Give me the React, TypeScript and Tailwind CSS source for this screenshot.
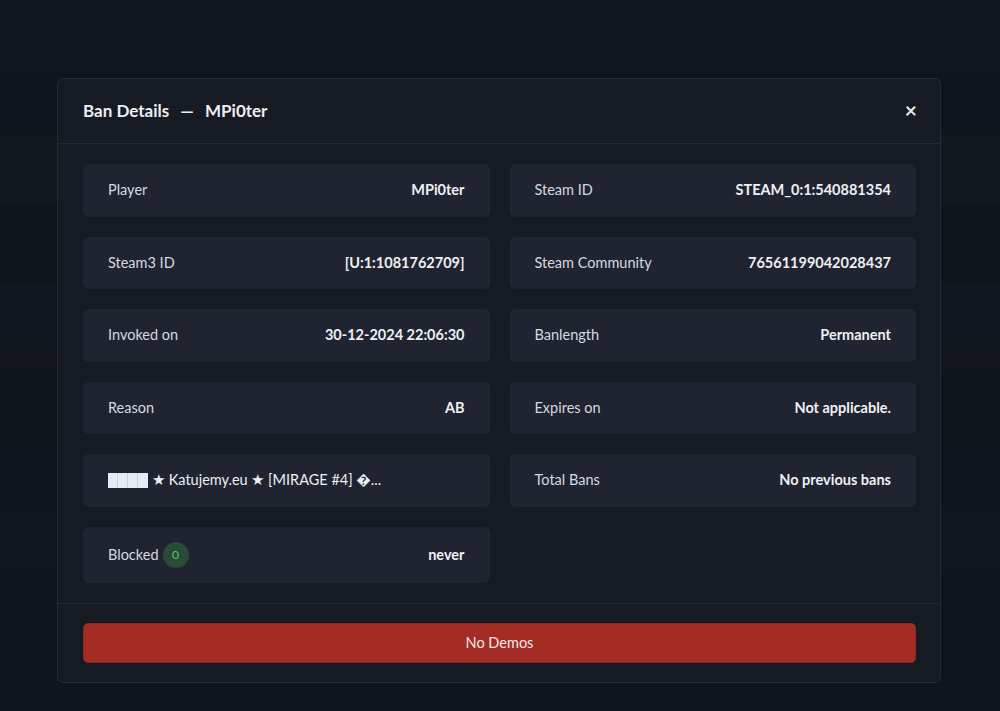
import React from "react";

function Card({ label, value, tall }: { label: React.ReactNode; value?: React.ReactNode; tall?: boolean }) {
  return (
    <div
      className={`flex items-center justify-between rounded-md bg-[#1f2430] pl-[25px] pr-[25px] ${tall ? "h-[56px]" : "h-[52.5px]"}`}
    >
      <div className="flex items-center text-[14.5px] text-[#d5d9e0]">{label}</div>
      {value !== undefined && <div className="text-[14.5px] font-bold text-[#eef0f3]">{value}</div>}
    </div>
  );
}

export default function App() {
  return (
    <div
      className="relative h-[711px] w-[1000px] overflow-hidden bg-[#10141c]"
      style={{ fontFamily: "Lato, 'Noto Sans', sans-serif" }}
    >
      {/* faint background bands */}
      <div className="flex h-full flex-col">
        <div className="h-[70px] bg-[#11151d]" />
        <div className="h-[65px] bg-[#10141c]" />
        <div className="h-[70px] bg-[#13181f]" />
        <div className="h-[80px] bg-[#10151c]" />
        <div className="h-[60px] bg-[#11171e]" />
        <div className="h-[25px] bg-[#14161e]" />
        <div className="h-[80px] bg-[#10151c]" />
        <div className="h-[60px] bg-[#10141c]" />
        <div className="h-[60px] bg-[#11171e]" />
        <div className="flex-1 bg-[#10141c]" />
      </div>

      {/* modal */}
      <div className="absolute left-[57px] top-[78px] flex h-[605px] w-[884px] flex-col rounded-md border border-[#252a33] bg-[#161a22]">
        <div className="flex h-[65px] items-center justify-between border-b border-[#232831] pl-[25px] pr-[23px]">
          <div className="text-[17px] font-bold text-[#eceef2]">
            Ban Details <span className="mx-[7px]">—</span> MPi0ter
          </div>
          <div className="-mt-[4px] text-[21px] font-bold leading-none text-[#e8eaee]">×</div>
        </div>

        <div className="grid flex-1 grid-cols-2 content-start gap-x-[20px] gap-y-[20px] border-b border-[#232831] pl-[25px] pr-[24px] pt-[20px]">
          <Card label="Player" value="MPi0ter" />
          <Card label="Steam ID" value="STEAM_0:1:540881354" />
          <Card label="Steam3 ID" value="[U:1:1081762709]" />
          <Card label="Steam Community" value="76561199042028437" />
          <Card label="Invoked on" value="30-12-2024 22:06:30" />
          <Card label="Banlength" value="Permanent" />
          <Card label="Reason" value="AB" />
          <Card label="Expires on" value="Not applicable." />
          <Card
            label={
              <span className="flex items-center text-[#eef0f3]">
                <span className="mr-[4px] inline-flex">
                  <span className="h-[15px] w-[10px] border-r border-[#c9cfd9] bg-[#e6eaf2]" />
                  <span className="h-[15px] w-[10px] border-r border-[#c9cfd9] bg-[#e6eaf2]" />
                  <span className="h-[15px] w-[10px] border-r border-[#c9cfd9] bg-[#e6eaf2]" />
                  <span className="h-[15px] w-[10px] bg-[#e6eaf2]" />
                </span>
                ★ Katujemy.eu ★ [MIRAGE #4] �...
              </span>
            }
          />
          <Card label="Total Bans" value="No previous bans" />
          <Card
            tall
            label={
              <>
                Blocked
                <span className="ml-[4px] flex h-[26px] w-[26px] items-center justify-center rounded-full bg-[#2b4a35] text-[12px] text-[#5bc46a]">
                  0
                </span>
              </>
            }
            value="never"
          />
        </div>

        <div className="flex h-[78px] items-center pl-[25px] pr-[24px]">
          <div className="flex h-[40px] w-full items-center justify-center rounded-[5px] border border-[#8e2720] bg-[#a52c24] text-[14.5px] text-[#f3e9e8]">
            No Demos
          </div>
        </div>
      </div>
    </div>
  );
}
